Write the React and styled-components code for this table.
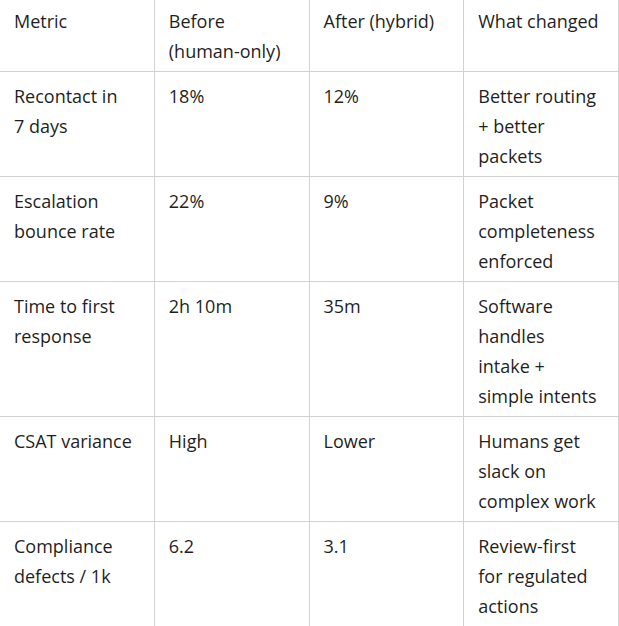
import React from "react";
import styled, { createGlobalStyle } from "styled-components";

const headers = ["Metric", "Before (human-only)", "After (hybrid)", "What changed"];

// non-breaking space keeps "7 days" together like the source table
const rows = [
  ["Recontact in 7\u00a0days", "18%", "12%", "Better routing + better packets"],
  ["Escalation bounce rate", "22%", "9%", "Packet completeness enforced"],
  ["Time to first response", "2h 10m", "35m", "Software handles intake + simple intents"],
  ["CSAT variance", "High", "Lower", "Humans get slack on complex work"],
  ["Compliance defects / 1k", "6.2", "3.1", "Review-first for regulated actions"],
];

function App() {
  return (
    <>
      <GlobalStyle />
      <Table>
        <thead>
          <tr>
            {headers.map((h) => (
              <HeadCell key={h}>{h}</HeadCell>
            ))}
          </tr>
        </thead>
        <tbody>
          {rows.map((row) => (
            <tr key={row[0]}>
              {row.map((c, i) => (
                <Cell key={i}>{c}</Cell>
              ))}
            </tr>
          ))}
        </tbody>
      </Table>
    </>
  );
}

export default App;

const GlobalStyle = createGlobalStyle`
  html, body {
    margin: 0;
    padding: 0;
    background: #fff;
    overflow: hidden;
  }
`;

const Table = styled.table`
  width: 619px;
  table-layout: fixed;
  border-collapse: collapse;
  font-family: "Open Sans", "Noto Sans", sans-serif;
  font-size: 18px;
  line-height: 30px;
  color: #1f1f1f;

  tbody td {
    border-top: 1px solid #d2d2d2;
  }
  td + td,
  th + th {
    border-left: 1px solid #d2d2d2;
  }
  td:last-child,
  th:last-child {
    border-right: 1px solid #d2d2d2;
  }
`;

const HeadCell = styled.th`
  width: 25%;
  text-align: left;
  font-weight: 400;
  vertical-align: top;
  padding: 6px 18px 5px 14px;
  hyphens: none;
`;

const Cell = styled.td`
  vertical-align: top;
  padding: 9px 18px 5px 14px;
`;
